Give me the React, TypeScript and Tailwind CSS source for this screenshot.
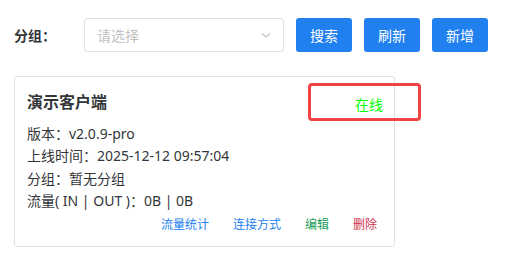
import React from "react";

const font = { fontFamily: '"Noto Sans", "Noto Sans CJK SC", sans-serif' };

const ACTIONS = [
  { label: "流量统计", cls: "text-[#2080f0]" },
  { label: "连接方式", cls: "text-[#2080f0]" },
  { label: "编辑", cls: "text-[#18a058]" },
  { label: "删除", cls: "text-[#d03050]" },
];

export default function App() {
  return (
    <div className="relative w-[522px] h-[263px] bg-white text-[#333639] pl-[14px] pt-[18px]" style={font}>
      {/* filter bar */}
      <div className="flex items-center h-[34px]">
        <span className="w-[70px] text-[14px] font-bold">分组：</span>
        <div className="w-[200px] h-[34px] border border-[#e0e0e6] rounded-[3px] flex items-center justify-between pl-[12px] pr-[11px]">
          <span className="text-[14px] text-[#c2c2c2]">请选择</span>
          <svg width="12" height="12" viewBox="0 0 12 12" fill="none" stroke="#c2c2c2" strokeWidth="1.2">
            <path d="M2 4.5 L6 8 L10 4.5" />
          </svg>
        </div>
        <div className="flex gap-3 ml-3">
          {["搜索", "刷新", "新增"].map(b => (
            <button key={b} className="w-[56px] h-[34px] rounded-[3px] bg-[#2080f0] text-white text-[14px]">
              {b}
            </button>
          ))}
        </div>
      </div>

      {/* card */}
      <div className="mt-[24px] w-[381px] h-[171px] border border-[#e0e0e6] rounded-[3px] pl-[12px] pr-[11px] pt-[12px]">
        <div className="flex items-center justify-between h-[26px]">
          <h3 className="text-[16px] font-bold">演示客户端</h3>
          <span className="text-[14px] text-[#00ff00] pt-[4px]">在线</span>
        </div>
        <div className="mt-[8px] text-[14px] leading-[22.4px]">
          <p>版本：v2.0.9-pro</p>
          <p>上线时间：2025-12-12 09:57:04</p>
          <p>分组：暂无分组</p>
          <p>流量( IN | OUT )：0B | 0B</p>
        </div>
        <div className="flex justify-end gap-[24px] pr-[6px] mt-[1px] text-[12px] leading-[22px]">
          {ACTIONS.map(a => (
            <span key={a.label} className={a.cls}>{a.label}</span>
          ))}
        </div>
      </div>

      {/* annotation */}
      <div className="absolute left-[308px] top-[83px] w-[113px] h-[38px] border-[3px] border-[#f04444] rounded-[4px]" />
    </div>
  );
}
